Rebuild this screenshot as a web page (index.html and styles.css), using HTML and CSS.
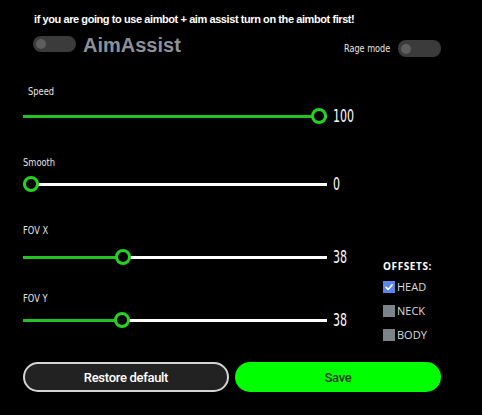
FILE: index.html
```html
<!DOCTYPE html>
<html lang="en">

<head>
    <meta charset="UTF-8">
    <meta name="viewport" content="width=device-width, initial-scale=1.0">
    <title>Aim Assist</title>
    <link rel="stylesheet" href="styles.css">
</head>

<body>
    <div class="panel">
        <p class="notice">if you are going to use aimbot + aim assist turn on the aimbot first!</p>

        <div class="header">
            <div class="title-group">
                <span class="toggle"><span class="toggle-knob"></span></span>
                <h1 class="title">AimAssist</h1>
            </div>
            <div class="rage">
                <span class="rage-label">Rage mode</span>
                <span class="toggle toggle-rage"><span class="toggle-knob"></span></span>
            </div>
        </div>

        <div class="main">
            <div class="sliders">
                <div class="field field-speed">
                    <div class="field-label"><span>Speed</span></div>
                    <div class="slider-row">
                        <div class="slider" style="--p: 1"><span class="knob"></span></div>
                        <span class="value">100</span>
                    </div>
                </div>
                <div class="field field-smooth">
                    <div class="field-label"><span>Smooth</span></div>
                    <div class="slider-row">
                        <div class="slider" style="--p: 0"><span class="knob"></span></div>
                        <span class="value">0</span>
                    </div>
                </div>
                <div class="field field-fovx">
                    <div class="field-label"><span>FOV X</span></div>
                    <div class="slider-row">
                        <div class="slider" style="--p: 0.318"><span class="knob"></span></div>
                        <span class="value">38</span>
                    </div>
                </div>
                <div class="field field-fovy">
                    <div class="field-label"><span>FOV Y</span></div>
                    <div class="slider-row">
                        <div class="slider" style="--p: 0.316"><span class="knob"></span></div>
                        <span class="value">38</span>
                    </div>
                </div>
            </div>

            <div class="offsets">
                <div class="offsets-title">OFFSETS:</div>
                <label class="check"><span class="box box-on">
                        <svg viewBox="0 0 12 12" width="12" height="12">
                            <path d="M3 6.3 L5.2 8.4 L9.2 3.8" fill="none" stroke="#fff" stroke-width="1.6"
                                stroke-linecap="round" stroke-linejoin="round" />
                        </svg>
                    </span>HEAD</label>
                <label class="check"><span class="box"></span>NECK</label>
                <label class="check"><span class="box"></span>BODY</label>
            </div>
        </div>

        <div class="buttons">
            <button class="btn btn-restore">Restore default</button>
            <button class="btn btn-save">Save</button>
        </div>
    </div>
</body>

</html>
```

FILE: styles.css
```css
body {
    margin: 0;
    background-color: #000000;
    color: #ffffff;
    font-family: "Liberation Sans", Arial, sans-serif;
}

.panel {
    width: 482px;
    height: 415px;
    padding-top: 13px;
    box-sizing: border-box;
}

.notice {
    margin: 0 0 0 34px;
    font-size: 11px;
    font-weight: bold;
    line-height: 12px;
    letter-spacing: -0.42px;
}

/* header: main toggle + title, rage mode on the right */
.header {
    display: flex;
    justify-content: space-between;
    align-items: center;
    margin-top: 9px;
    padding: 0 41px 0 33px;
    height: 20px;
}

.title-group {
    display: flex;
    align-items: center;
    gap: 7px;
}

.title {
    margin: 0;
    font-size: 20px;
    font-weight: bold;
    color: #8c909b;
    line-height: 20px;
    margin-top: 1px;
}

.toggle {
    display: flex;
    align-items: center;
    width: 43px;
    height: 16px;
    border-radius: 8px;
    background-color: #3b3b3b;
    padding-left: 3px;
    box-sizing: border-box;
}

.toggle-knob {
    width: 10px;
    height: 10px;
    border-radius: 50%;
    background-color: #5e5e5e;
}

.toggle-rage {
    height: 17px;
    margin-top: 9px;
}

.rage {
    display: flex;
    align-items: center;
    gap: 8px;
}

/* condensed text: the only condensed face here is DejaVu, squeezed a bit more */
.rage-label,
.field-label span,
.value {
    display: inline-block;
    font-family: "DejaVu Sans Condensed", "DejaVu Sans", sans-serif;
    white-space: nowrap;
    transform-origin: left center;
}

.rage-label {
    font-size: 11px;
    color: #e6e6e6;
    margin-top: 8px;
    width: 46px;
    transform: scaleX(0.82);
}

/* sliders */
.main {
    display: flex;
}

.sliders {
    width: 383px;
    padding-left: 23px;
    box-sizing: border-box;
}

.field-label {
    font-size: 11px;
    line-height: 13px;
    color: #e6e6e6;
}

.field-label span {
    transform: scaleX(0.84);
}

.field-speed {
    margin-top: 31px;
}

.field-speed .field-label {
    padding-left: 5px;
}

.field-speed .slider-row {
    margin-top: 10px;
}

.field-smooth {
    margin-top: 32px;
}

.field-fovx {
    margin-top: 32px;
}

.field-fovx .slider-row {
    margin-top: 12px;
}

.field-fovy {
    margin-top: 27px;
}

.slider-row {
    display: flex;
    align-items: center;
    gap: 6px;
    margin-top: 7px;
}

.slider {
    position: relative;
    width: 304px;
    height: 16px;
    background: linear-gradient(to right,
            #22c322 calc(var(--p) * (100% - 16px) + 8px),
            #ffffff calc(var(--p) * (100% - 16px) + 8px)) no-repeat center / 100% 3px;
}

.knob {
    position: absolute;
    top: 0;
    left: calc(var(--p) * (100% - 16px));
    width: 16px;
    height: 16px;
    border: 3px solid #22d322;
    border-radius: 50%;
    background-color: #000000;
    box-sizing: border-box;
}

.value {
    font-size: 18px;
    line-height: 16px;
    color: #ffffff;
    transform: scaleX(0.68);
}

/* offsets checkboxes */
.offsets {
    display: flex;
    flex-direction: column;
    gap: 12px;
    margin-top: 205px;
    font-family: "Open Sans", sans-serif;
}

.offsets-title {
    font-size: 10px;
    font-weight: bold;
    letter-spacing: 0.6px;
    line-height: 14px;
    margin-bottom: -4px;
}

.check {
    display: flex;
    align-items: center;
    gap: 2px;
    font-size: 11px;
    line-height: 12px;
    color: #dcdcdc;
}

.box {
    display: flex;
    width: 12px;
    height: 12px;
    background-color: #7c8489;
}

.box-on {
    background-color: #5b86ef;
}

/* bottom buttons */
.buttons {
    display: flex;
    gap: 6px;
    padding-left: 23px;
    margin-top: 21px;
}

.btn {
    width: 206px;
    height: 30px;
    border-radius: 15px;
    font-family: Roboto, sans-serif;
    font-size: 13px;
    font-weight: 500;
    letter-spacing: -0.3px;
    cursor: pointer;
}

.btn-restore {
    background-color: #222222;
    border: 2px solid #d4d4d4;
    color: #ffffff;
}

.btn-save {
    background-color: #00ff00;
    border: none;
    color: #1e3a1e;
}
```
